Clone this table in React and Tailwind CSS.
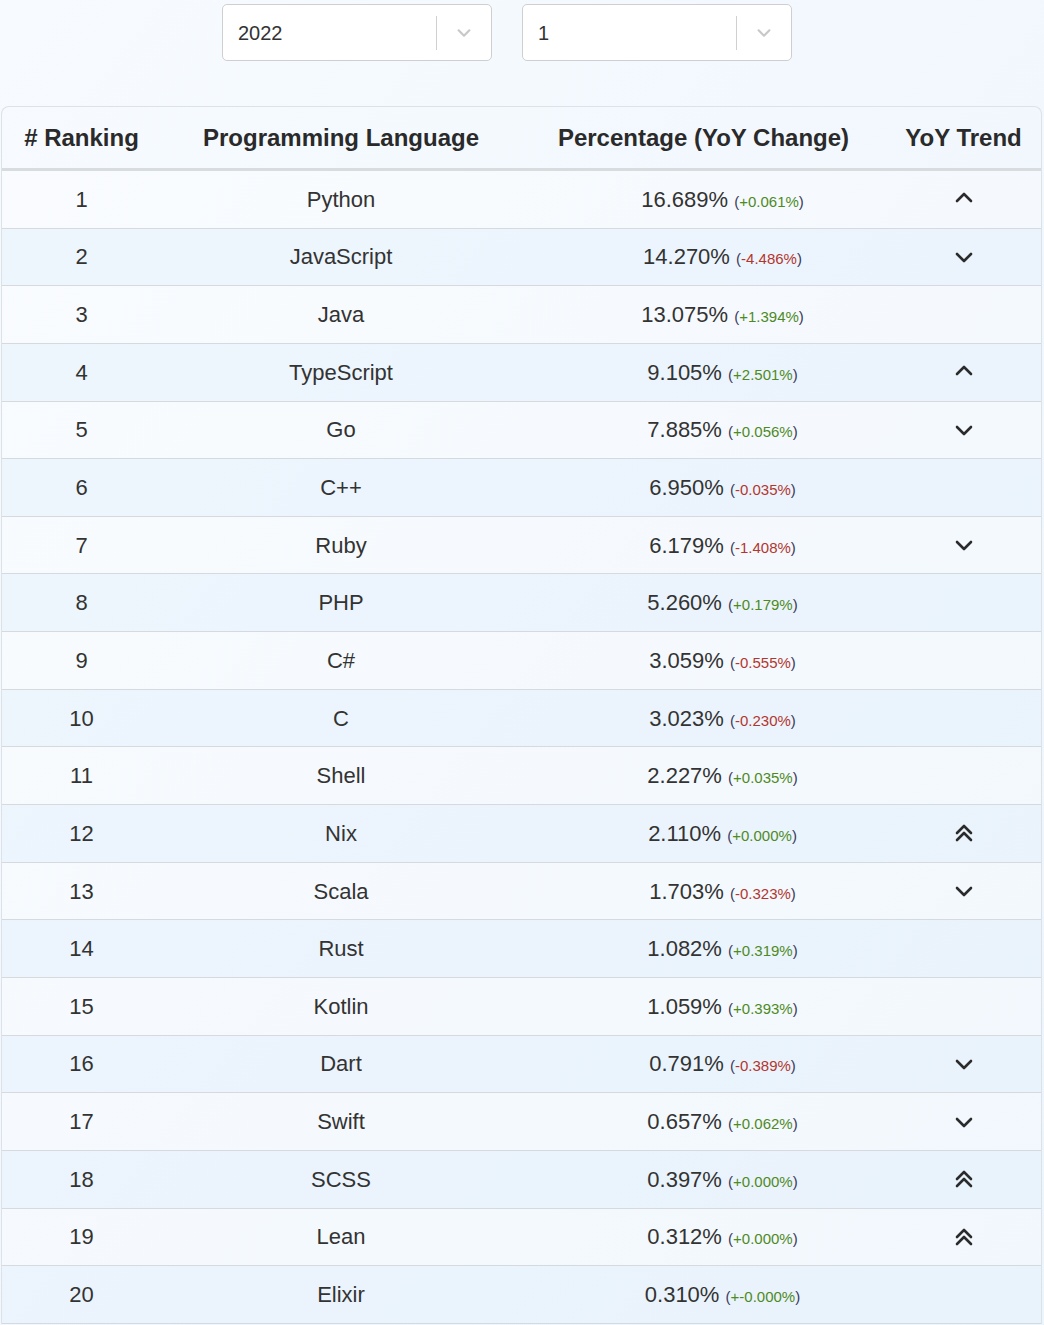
import React from "react";

const rows = [
  [1, "Python", "16.689%", "+0.061%", "up"],
  [2, "JavaScript", "14.270%", "-4.486%", "down"],
  [3, "Java", "13.075%", "+1.394%", null],
  [4, "TypeScript", "9.105%", "+2.501%", "up"],
  [5, "Go", "7.885%", "+0.056%", "down"],
  [6, "C++", "6.950%", "-0.035%", null],
  [7, "Ruby", "6.179%", "-1.408%", "down"],
  [8, "PHP", "5.260%", "+0.179%", null],
  [9, "C#", "3.059%", "-0.555%", null],
  [10, "C", "3.023%", "-0.230%", null],
  [11, "Shell", "2.227%", "+0.035%", null],
  [12, "Nix", "2.110%", "+0.000%", "double"],
  [13, "Scala", "1.703%", "-0.323%", "down"],
  [14, "Rust", "1.082%", "+0.319%", null],
  [15, "Kotlin", "1.059%", "+0.393%", null],
  [16, "Dart", "0.791%", "-0.389%", "down"],
  [17, "Swift", "0.657%", "+0.062%", "down"],
  [18, "SCSS", "0.397%", "+0.000%", "double"],
  [19, "Lean", "0.312%", "+0.000%", "double"],
  [20, "Elixir", "0.310%", "+-0.000%", null],
];

function Trend({ kind }) {
  if (!kind) return null;
  const path =
    kind === "up"
      ? "M3 12 L10 5 L17 12"
      : kind === "down"
      ? "M3 7 L10 14 L17 7"
      : "M3 10 L10 3 L17 10 M3 17 L10 10 L17 17";
  return (
    <svg width="20" height="20" viewBox="0 0 20 20" fill="none">
      <path d={path} stroke="#2b2b2b" strokeWidth="2.6" strokeLinecap="round" strokeLinejoin="round" />
    </svg>
  );
}

function Select({ value }) {
  return (
    <div className="flex h-[57px] w-[270px] items-center rounded-[5px] border border-[#cfcfcf] bg-white">
      <span className="flex-1 pl-[15px] text-[20px] text-[#333]">{value}</span>
      <span className="h-[34px] w-px bg-[#d0d0d0]" />
      <span className="flex w-[54px] justify-center">
        <svg width="18" height="18" viewBox="0 0 20 20" fill="none">
          <path d="M4 7 L10 13 L16 7" stroke="#c8c8c8" strokeWidth="2.4" strokeLinecap="round" strokeLinejoin="round" />
        </svg>
      </span>
    </div>
  );
}

export default function App() {
  return (
    <div
      className="min-h-[1325px] w-[1044px] bg-gradient-to-br from-[#f7fbff] to-[#ecf4fc] text-[#333]"
      style={{ fontFamily: '"Liberation Sans", Arial, sans-serif' }}
    >
      {/* Filters */}
      <div className="flex h-[106px] gap-[30px] pl-[222px] pt-[4px]">
        <Select value="2022" />
        <Select value="1" />
      </div>

      {/* Table */}
      <div className="ml-px mr-[2px] overflow-hidden rounded-t-[8px] border-x border-t border-[#dde2e8]">
        <div className="grid h-[64px] grid-cols-[159px_360px_365px_1fr] items-center border-b-[3px] border-[#d9dcdf] text-[24px] font-bold text-[#2a2a2a]">
          <div className="text-center"># Ranking</div>
          <div className="text-center">Programming Language</div>
          <div className="text-center">Percentage (YoY Change)</div>
          <div className="text-center">YoY Trend</div>
        </div>

        {rows.map(([rank, lang, pct, chg, trend]) => (
          <div
            key={rank}
            className={
              "grid h-[57.65px] grid-cols-[159px_360px_365px_1fr] items-center border-b border-[#d6dadf] text-[22px] " +
              (rank % 2 === 0 ? "bg-[#e6f1fc]/50" : "bg-white/30")
            }
          >
            <div className="text-center">{rank}</div>
            <div className="text-center">{lang}</div>
            <div className="pl-[38px] text-center">
              {pct}{" "}
              <span className="text-[15px] text-[#3a3a5a]">
                (
                <span className={chg.startsWith("-") ? "text-[#b3362e]" : "text-[#4e8a1e]"}>{chg}</span>
                )
              </span>
            </div>
            <div className="flex justify-center">
              <Trend kind={trend} />
            </div>
          </div>
        ))}
      </div>
    </div>
  );
}
